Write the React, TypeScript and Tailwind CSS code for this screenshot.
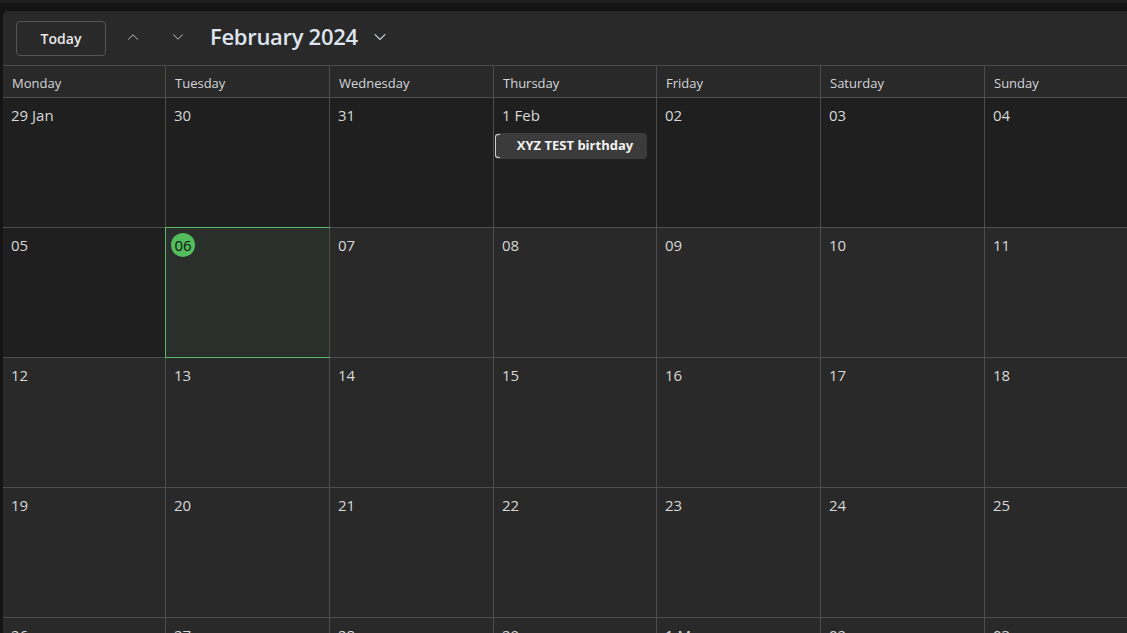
import React from 'react';
import { ChevronUp, ChevronDown } from 'lucide-react';

const days = ['Monday', 'Tuesday', 'Wednesday', 'Thursday', 'Friday', 'Saturday', 'Sunday'];
const widths = ['w-[162px]', 'w-[164px]', 'w-[164px]', 'w-[163px]', 'w-[164px]', 'w-[164px]', 'w-[164px]'];

type Cell = { label: string; past?: boolean; today?: boolean; event?: string };

const weeks: Cell[][] = [
  [
    { label: '29 Jan', past: true },
    { label: '30', past: true },
    { label: '31', past: true },
    { label: '1 Feb', past: true, event: 'XYZ TEST birthday' },
    { label: '02', past: true },
    { label: '03', past: true },
    { label: '04', past: true },
  ],
  [
    { label: '05', past: true },
    { label: '06', today: true },
    { label: '07' },
    { label: '08' },
    { label: '09' },
    { label: '10' },
    { label: '11' },
  ],
  ['12', '13', '14', '15', '16', '17', '18'].map((l) => ({ label: l })),
  ['19', '20', '21', '22', '23', '24', '25'].map((l) => ({ label: l })),
  ['26', '27', '28', '29', '1 Mar', '02', '03'].map((l) => ({ label: l })),
];

export default function App() {
  return (
    <div
      className="w-[1127px] h-[633px] overflow-hidden bg-[#141414] flex flex-col"
      style={{ fontFamily: '"Open Sans", "Noto Sans", sans-serif' }}
    >
      <div className="h-[3px] bg-[#1f1f1f] shrink-0" />
      <div className="mt-[8px] ml-[3px] w-[1160px] flex-1 bg-[#292929] rounded-tl-[5px] overflow-hidden flex flex-col">
        {/* Header */}
        <div className="h-[54px] shrink-0 flex items-center pl-[13px]">
          <button className="w-[90px] h-[35px] rounded-[4px] border border-[#555] text-[14px] font-semibold text-[#e8e8e8] bg-[#292929]">
            Today
          </button>
          <div className="ml-[15px] w-[24px] flex justify-center -mt-[3px]">
            <ChevronUp className="w-[18px] h-[18px] text-[#bfc4cc]" strokeWidth={1.3} />
          </div>
          <div className="ml-[21px] w-[24px] flex justify-center -mt-[3px]">
            <ChevronDown className="w-[18px] h-[18px] text-[#bfc4cc]" strokeWidth={1.3} />
          </div>
          <span className="ml-[20px] -mt-[4px] text-[22px] font-semibold text-[#dfe5ee] tracking-[-0.3px]">February 2024</span>
          <div className="ml-[12px] -mt-[3px] flex items-center">
            <ChevronDown className="w-[20px] h-[20px] text-[#bfc4cc]" strokeWidth={1.3} />
          </div>
        </div>

        {/* Day names */}
        <div className="h-[32px] shrink-0 flex border-t border-[#4d4d4d]">
          {days.map((d, i) => (
            <div
              key={d}
              className={`${widths[i]} shrink-0 h-full flex items-center pt-[5px] pl-[9px] text-[13px] text-[#d4d6da] ${i > 0 ? 'border-l border-[#4d4d4d]' : ''}`}
            >
              {d}
            </div>
          ))}
        </div>

        {/* Weeks */}
        {weeks.map((week, wi) => (
          <div key={wi} className="h-[130px] shrink-0 flex border-t border-[#4d4d4d]">
            {week.map((c, i) => (
              <div
                key={i}
                className={`${widths[i]} shrink-0 h-full relative ${i > 0 ? 'border-l border-[#4d4d4d]' : ''} ${
                  c.today ? 'bg-[#2a2f2b]' : c.past ? 'bg-[#1f1f1f]' : 'bg-[#292929]'
                }`}
              >
                {c.today && (
                  <div className="absolute -left-px -top-px -right-px -bottom-px border border-[#5cb866] pointer-events-none" />
                )}
                {c.today ? (
                  <div className="ml-[5px] mt-[5px] w-[24px] h-[24px] rounded-full bg-[#52bd5d] flex items-center justify-center text-[15px] text-[#111]">
                    {c.label}
                  </div>
                ) : (
                  <div className="pl-[8px] pt-[7px] text-[15px] text-[#d8d8d8] leading-[20px]">{c.label}</div>
                )}
                {c.event && (
                  <div className="mt-[8px] ml-[1px] mr-[9px] h-[26px] rounded-[4px] bg-[#3b3b3b] flex items-center relative">
                    <div className="absolute left-0 top-[1px] bottom-[1px] w-[5px] rounded-l-[3px] border border-r-0 border-[#cfcfcf]" />
                    <span className="w-full pl-[8px] text-center text-[13px] font-bold text-[#f2f2f2]">{c.event}</span>
                  </div>
                )}
              </div>
            ))}
          </div>
        ))}
      </div>
    </div>
  );
}
